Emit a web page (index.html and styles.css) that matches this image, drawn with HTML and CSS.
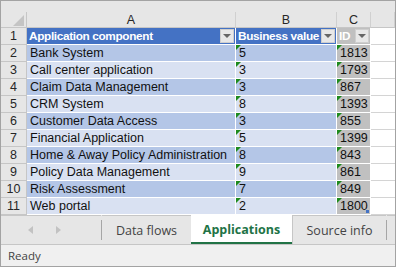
FILE: index.html
```html
<!DOCTYPE html>
<html lang="en">

<head>
    <meta charset="UTF-8" />
    <title>Applications</title>
    <link rel="stylesheet" href="styles.css">
</head>

<body>
    <div class="window">
        <div class="top-gap"></div>

        <div class="grid">
            <div class="corner">
                <svg width="11" height="11" viewBox="0 0 11 11"><polygon points="11,0 11,11 0,11" fill="#c4c4c4" /></svg>
            </div>
            <div class="colhead">A</div>
            <div class="colhead">B</div>
            <div class="colhead">C</div>
            <div class="colhead"></div>

            <div class="rowhead">1</div>
            <div class="cell th">Application component<span class="drop"></span></div>
            <div class="cell th">Business value<span class="drop"></span></div>
            <div class="cell th id">ID<span class="drop"></span></div>
            <div class="cell empty"></div>

            <div class="rowhead">2</div>
            <div class="cell dark">Bank System</div>
            <div class="cell dark num">5</div>
            <div class="cell id num">1813</div>
            <div class="cell empty"></div>

            <div class="rowhead">3</div>
            <div class="cell light">Call center application</div>
            <div class="cell light num">3</div>
            <div class="cell id num">1793</div>
            <div class="cell empty"></div>

            <div class="rowhead">4</div>
            <div class="cell dark">Claim Data Management</div>
            <div class="cell dark num">3</div>
            <div class="cell id num">867</div>
            <div class="cell empty"></div>

            <div class="rowhead">5</div>
            <div class="cell light">CRM System</div>
            <div class="cell light num">8</div>
            <div class="cell id num">1393</div>
            <div class="cell empty"></div>

            <div class="rowhead">6</div>
            <div class="cell dark">Customer Data Access</div>
            <div class="cell dark num">3</div>
            <div class="cell id num">855</div>
            <div class="cell empty"></div>

            <div class="rowhead">7</div>
            <div class="cell light">Financial Application</div>
            <div class="cell light num">5</div>
            <div class="cell id num">1399</div>
            <div class="cell empty"></div>

            <div class="rowhead">8</div>
            <div class="cell dark">Home &amp; Away Policy Administration</div>
            <div class="cell dark num">8</div>
            <div class="cell id num">843</div>
            <div class="cell empty"></div>

            <div class="rowhead">9</div>
            <div class="cell light">Policy Data Management</div>
            <div class="cell light num">9</div>
            <div class="cell id num">861</div>
            <div class="cell empty"></div>

            <div class="rowhead">10</div>
            <div class="cell dark">Risk Assessment</div>
            <div class="cell dark num">7</div>
            <div class="cell id num">849</div>
            <div class="cell empty"></div>

            <div class="rowhead">11</div>
            <div class="cell light">Web portal</div>
            <div class="cell light num">2</div>
            <div class="cell id num last">1800</div>
            <div class="cell empty"></div>
        </div>

        <div class="tabs">
            <div class="tab-nav">
                <span class="arrow left"></span>
                <span class="arrow right"></span>
            </div>
            <div class="tab-sep"></div>
            <div class="tab">Data flows</div>
            <div class="tab active">Applications</div>
            <div class="tab source">Source info</div>
            <div class="tab-sep"></div>
            <div class="tab-rest"></div>
        </div>

        <div class="status">Ready</div>
    </div>
</body>

</html>
```

FILE: styles.css
```css
* {
    margin: 0;
    padding: 0;
    box-sizing: border-box;
}

body {
    width: 396px;
    height: 267px;
    background-color: #fff;
    font-family: 'Liberation Sans', Arial, sans-serif;
    overflow: hidden;
}

.window {
    width: 396px;
    height: 267px;
    border: 1px solid #a3a3a3;
    display: flex;
    flex-direction: column;
}

.top-gap {
    height: 11px;
    background-color: #e6e6e6;
}

.grid {
    display: grid;
    grid-template-columns: 26px 209px 101px 34px 1fr;
    grid-template-rows: 16px repeat(11, 17px);
    background-color: #fff;
}

.corner,
.colhead,
.rowhead {
    background-color: #e6e6e6;
    border-right: 1px solid #c6c6c6;
    border-bottom: 1px solid #c6c6c6;
    color: #262626;
    font-size: 12.5px;
    display: flex;
    align-items: center;
    justify-content: center;
}

.corner {
    align-items: flex-end;
    justify-content: flex-end;
    padding: 0 2px 1px 0;
}

.colhead {
    border-right-color: #d0d0d0;
}

.colhead:last-of-type {
    border-right: none;
}

.cell {
    position: relative;
    display: flex;
    align-items: center;
    padding-left: 3px;
    font-size: 12.5px;
    color: #111;
    border-right: 1px solid #fff;
    border-bottom: 1px solid #fff;
    white-space: nowrap;
    overflow: hidden;
}

.cell.dark {
    background-color: #b4c6e7;
}

.cell.light {
    background-color: #d9e1f2;
}

.cell.id {
    background-color: #c0c0c0;
}

.cell.empty {
    background-color: #fff;
    border-right: none;
    border-bottom: 1px solid #d4d4d4;
}

.cell.th {
    background-color: #4472c4;
    color: #fff;
    font-weight: bold;
    font-size: 11.8px;
    letter-spacing: -0.35px;
    padding-left: 2px;
}

.cell.th.id {
    background-color: #c0c0c0;
}

.drop {
    flex-shrink: 0;
    margin-left: auto;
    margin-right: 1px;
    width: 14px;
    height: 14px;
    background-color: #e8e8e8;
    border: 1px solid #cfcfcf;
    display: flex;
    align-items: center;
    justify-content: center;
}

.drop::after {
    content: "";
    border-left: 4px solid transparent;
    border-right: 4px solid transparent;
    border-top: 4px solid #666;
}

.cell.num::before {
    content: "";
    position: absolute;
    top: 0;
    left: 0;
    border-top: 5px solid #1d8a1d;
    border-right: 5px solid transparent;
}

.cell.last::after {
    content: "";
    position: absolute;
    right: 1px;
    bottom: 1px;
    width: 3px;
    height: 3px;
    background-color: #4472c4;
}

.tabs {
    height: 29px;
    display: flex;
    background-color: #e6e6e6;
    font-family: 'Open Sans', 'Noto Sans', sans-serif;
    font-size: 12.5px;
}

.tab-nav {
    width: 100px;
    border-top: 1px solid #c6c6c6;
    display: flex;
    align-items: center;
    padding-left: 27px;
    gap: 23px;
}

.arrow {
    width: 0;
    height: 0;
    border-top: 4px solid transparent;
    border-bottom: 4px solid transparent;
}

.arrow.left {
    border-right: 5px solid #c2c2c2;
}

.arrow.right {
    border-left: 5px solid #c2c2c2;
}

.tab-sep {
    width: 1px;
    background-color: #a6a6a6;
    margin: 5px 0 4px;
}

.tab {
    display: flex;
    align-items: center;
    justify-content: center;
    color: #444;
    border-top: 1px solid #c6c6c6;
}

.tab:nth-of-type(3) {
    width: 89px;
}

.tab.active {
    width: 101px;
    background-color: #fff;
    color: #217346;
    font-weight: bold;
    border-top: 1px solid #fff;
    border-bottom: 2px solid #217346;
}

.tab.source {
    width: 94px;
    border-left: 1px solid #c6c6c6;
}

.tab-rest {
    flex: 1;
    border-top: 1px solid #c6c6c6;
}

.status {
    flex: 1;
    border-top: 1px solid #c6c6c6;
    background-color: #f0f0f0;
    color: #444;
    font-family: 'Open Sans', 'Noto Sans', sans-serif;
    font-size: 11.5px;
    display: flex;
    align-items: center;
    padding-left: 7px;
}
```
